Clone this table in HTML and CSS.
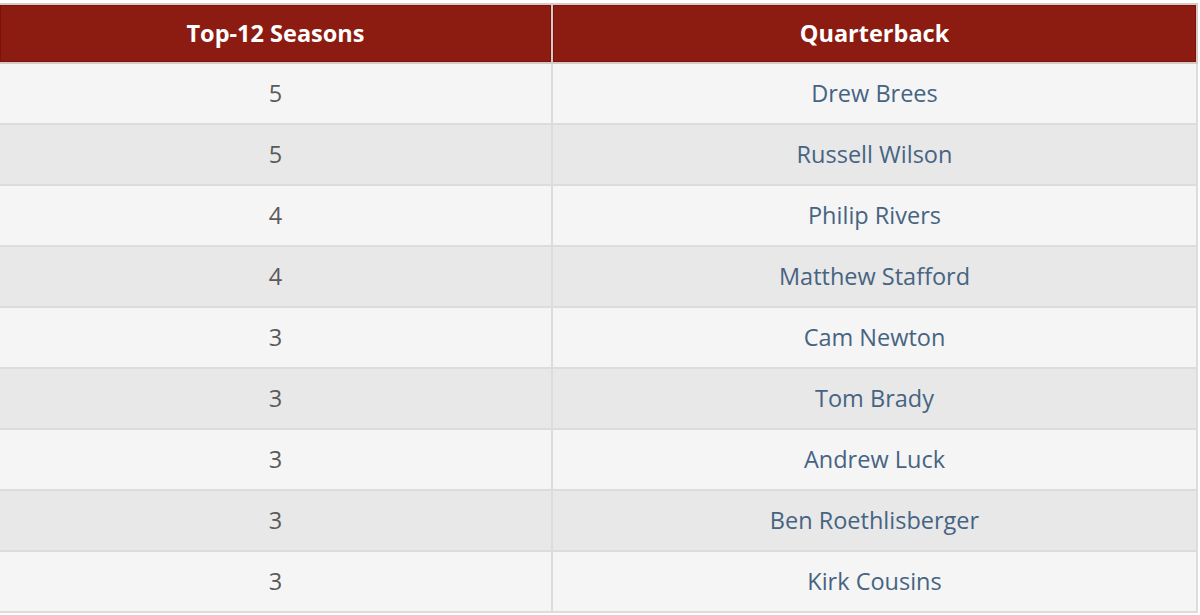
FILE: index.html
```html
<!DOCTYPE html>
<html>
<head>
<meta charset="utf-8">
<link rel="stylesheet" href="styles.css">
</head>
<body>
<table class="qb-table">
  <thead>
    <tr><th class="col-seasons">Top-12 Seasons</th><th>Quarterback</th></tr>
  </thead>
  <tbody>
    <tr><td>5</td><td><a class="name">Drew Brees</a></td></tr>
    <tr><td>5</td><td><a class="name">Russell Wilson</a></td></tr>
    <tr><td>4</td><td><a class="name">Philip Rivers</a></td></tr>
    <tr><td>4</td><td><a class="name">Matthew Stafford</a></td></tr>
    <tr><td>3</td><td><a class="name">Cam Newton</a></td></tr>
    <tr><td>3</td><td><a class="name">Tom Brady</a></td></tr>
    <tr><td>3</td><td><a class="name">Andrew Luck</a></td></tr>
    <tr><td>3</td><td><a class="name">Ben Roethlisberger</a></td></tr>
    <tr><td>3</td><td><a class="name">Kirk Cousins</a></td></tr>
  </tbody>
</table>
</body>
</html>
```
FILE: styles.css
```css
html, body {
  margin: 0;
  padding: 0;
  background: #ffffff;
}
body {
  padding-top: 3px;
  font-family: "Open Sans", "Liberation Sans", sans-serif;
}
.qb-table {
  border-collapse: collapse;
  width: 1200px;
  margin-left: -2px;
  table-layout: fixed;
}
.qb-table th,
.qb-table td {
  border: 2px solid #dcdcdc;
  text-align: center;
  padding: 0;
}
.qb-table th {
  height: 55px;
  padding-bottom: 2px;
  background: #8c1b12;
  color: #ffffff;
  font-weight: 700;
  font-size: 23.5px;
  border-color: #d8c8c6;
  box-shadow: inset 0 0 0 1px #7a130c;
}
.col-seasons {
  width: 551px;
}
.qb-table td {
  height: 59px;
  font-size: 23.5px;
  color: #5a5a5a;
  line-height: 1.2;
}
.qb-table tbody tr:nth-child(odd) td {
  background: #f5f5f5;
}
.qb-table tbody tr:nth-child(even) td {
  background: #e8e8e8;
}
.name {
  color: #466482;
  text-decoration: none;
}
```
